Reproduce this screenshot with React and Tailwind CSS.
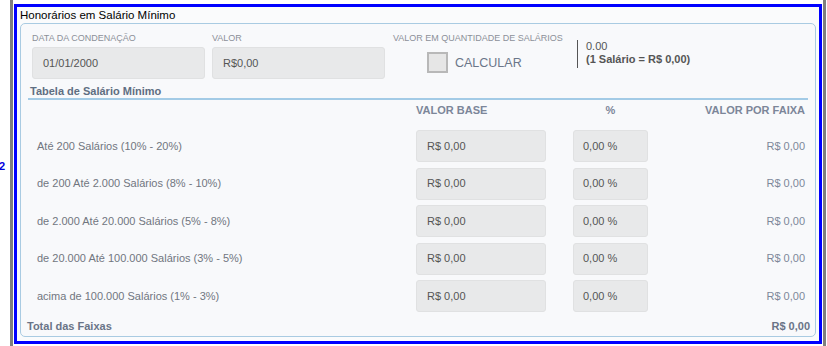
export default function App() {
  const rows = [
    "Até 200 Salários (10% - 20%)",
    "de 200 Até 2.000 Salários (8% - 10%)",
    "de 2.000 Até 20.000 Salários (5% - 8%)",
    "de 20.000 Até 100.000 Salários (3% - 5%)",
    "acima de 100.000 Salários (1% - 3%)",
  ];
  return (
    <div className="w-[827px] h-[346px] bg-white flex font-['Liberation_Sans',Arial,sans-serif] overflow-hidden">
      <div className="w-[10px] relative shrink-0">
        <span className="absolute left-[-1px] top-[159px] text-[11px] font-bold text-[#0000dd] leading-[14px]">2</span>
      </div>
      <div className="w-[3px] h-full bg-[#7f7f7f] shrink-0" />
      <div className="w-[1px] shrink-0" />
      <div className="w-[808px] shrink-0 mt-[4px] h-[340px] border-[3px] border-[#0000ff] bg-[#fafbfc] flex flex-col px-[3px]">
        <div className="h-[16px] pt-[1px] text-[11.5px] leading-[15px] text-black">Honorários em Salário Mínimo</div>
        <div className="h-[314px] border border-[#a9cbe2] rounded-[5px] bg-[#f8f9fb] flex flex-col">
          {/* top section */}
          <div className="flex pt-[8px] pl-[11px]">
            <div className="w-[173px]">
              <div className="h-[12px] text-[9px] leading-[12px] text-[#8c9099]">DATA DA CONDENAÇÃO</div>
              <div className="mt-[3px] h-[32px] rounded-[3px] bg-[#e8e9ea] border border-[#e0e1e2] pl-[10px] flex items-center text-[11px] text-[#555]">01/01/2000</div>
            </div>
            <div className="w-[173px] ml-[7px]">
              <div className="h-[12px] text-[9px] leading-[12px] text-[#8c9099]">VALOR</div>
              <div className="mt-[3px] h-[32px] rounded-[3px] bg-[#e8e9ea] border border-[#e0e1e2] pl-[10px] flex items-center text-[11px] text-[#555]">R$0,00</div>
            </div>
            <div className="w-[184px] ml-[8px]">
              <div className="h-[12px] text-[9px] leading-[12px] text-[#8c9099] whitespace-nowrap">VALOR EM QUANTIDADE DE SALÁRIOS</div>
              <div className="mt-[8px] flex items-center pl-[34px]">
                <div className="w-[21px] h-[21px] border-2 border-[#b8b8b8] bg-[#e6e6e6]" />
                <span className="ml-[7px] text-[12.5px] leading-[16px] text-[#6b7689] mt-[1px]">CALCULAR</span>
              </div>
            </div>
            <div className="mt-[8px] h-[28px] border-l border-[#555] pl-[8px] text-[11px] leading-[13px] text-[#555]">
              <div>0.00</div>
              <div className="font-bold">(1 Salário = R$ 0,00)</div>
            </div>
          </div>

          {/* table title */}
          <div className="mx-[7px] mt-[6px] h-[15px] border-b-[2px] border-[#a3cbe6] pl-[2px] text-[11px] leading-[13px] font-bold text-[#5f6e82]">
            Tabela de Salário Mínimo
          </div>

          {/* header */}
          <div className="flex mt-[3px] h-[14px] text-[11px] leading-[14px] font-bold text-[#7c8699]">
            <div className="w-[395px]" />
            <div className="w-[130px]">VALOR BASE</div>
            <div className="w-[75px] ml-[27px] text-center">%</div>
            <div className="flex-1 text-right pr-[10px]">VALOR POR FAIXA</div>
          </div>

          {/* rows */}
          <div className="flex flex-col gap-[5.5px] mt-[13px]">
            {rows.map((r) => (
              <div key={r} className="flex items-center h-[32px] text-[11px]">
                <div className="w-[395px] pl-[16px] text-[#71767f]">{r}</div>
                <div className="w-[130px] h-[32px] rounded-[3px] bg-[#e8e9ea] border border-[#e0e1e2] pl-[10px] flex items-center text-[#555]">R$ 0,00</div>
                <div className="w-[75px] h-[32px] ml-[27px] rounded-[3px] bg-[#e8e9ea] border border-[#e0e1e2] pl-[9px] flex items-center text-[#555]">0,00 %</div>
                <div className="flex-1 text-right pr-[10px] text-[#7d889a]">R$ 0,00</div>
              </div>
            ))}
          </div>

          {/* total */}
          <div className="flex mt-[7px] h-[14px] text-[11px] leading-[14px] font-bold text-[#6a7487]">
            <div className="pl-[6px]">Total das Faixas</div>
            <div className="flex-1 text-right pr-[5px]">R$ 0,00</div>
          </div>
        </div>
      </div>
      <div className="w-[1px] shrink-0" />
      <div className="w-[3px] h-full bg-[#7f7f7f] shrink-0" />
    </div>
  );
}
